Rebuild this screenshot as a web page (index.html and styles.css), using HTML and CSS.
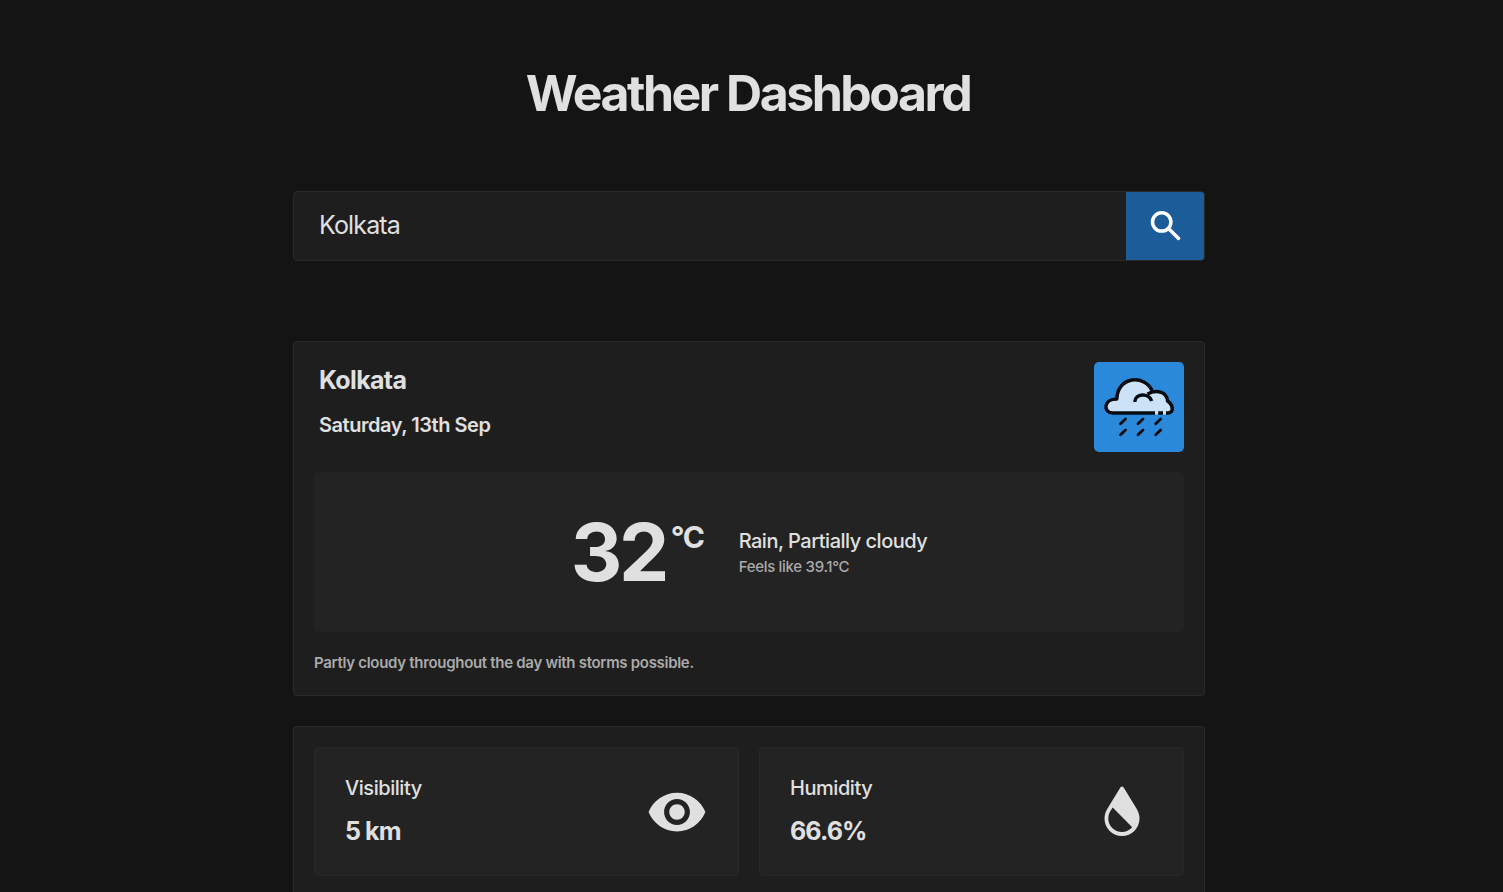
FILE: index.html
```html
<!DOCTYPE html>
<html lang="en">
<head>
<meta charset="utf-8">
<title>Weather Dashboard</title>
<link rel="stylesheet" href="styles.css">
</head>
<body>
<main class="page">
  <h1 class="title">Weather Dashboard</h1>
  <div class="search">
    <span class="query">Kolkata</span>
    <button class="go" aria-label="Search"><svg viewBox="0 0 40 40" width="40" height="40" fill="none" stroke="#fff" stroke-width="3.5" stroke-linecap="round"><circle cx="16.7" cy="15.900" r="9.200"/><path d="M24 23L33.600 32.400"/></svg></button>
  </div>
  <section class="card today">
    <header class="head">
      <div class="place"><h2 class="city">Kolkata</h2><p class="date">Saturday, 13th Sep</p></div>
      <div class="badge"><svg viewBox="0 0 90 90" width="90" height="90" fill="none" stroke="#080b10" stroke-width="3.500" stroke-linejoin="round">
        <path fill="#cce3f7" stroke="none" d="M19 51C9 51 9 37 22.800 37C23.500 14 51 12 58.500 29.500C67 27.500 73 31 73.500 39C80 43 80 51 74 51Z"/>
        <path d="M61 51H19C9 51 9 37 22.800 37C23.500 14 51 12 58.500 29.500"/>
        <path d="M53.500 32C62 27 73 29.500 73.500 39C79.500 43 80 51 74 51H72M64.200 51H69"/>
        <path d="M40.800 40C41 31 55 30.500 57.700 39"/>
        <path stroke="#cce3f7" stroke-width="3" d="M61 51h3M69 51h3"/>
        <path stroke-width="2.800" stroke-linecap="round" d="M26.500 61.700l5-4.700M44 61.700l5-4.700M61.700 61.700l5-4.700M26.500 72.700l5-4.700M44 72.700l5-4.700M61.700 72.700l5-4.700"/>
      </svg></div>
    </header>
    <div class="weather">
      <div class="temp">32<span class="unit">°C</span></div>
      <div class="condition"><p class="state">Rain, Partially cloudy</p><p class="feels">Feels like 39.1°C</p></div>
    </div>
    <p class="summary">Partly cloudy throughout the day with storms possible.</p>
  </section>
  <section class="card stats">
    <div class="stat"><div class="reading"><p class="label">Visibility</p><p class="value">5 km</p></div>
      <svg viewBox="0 0 24 24" width="62" height="62"><path fill="#e0e0e0" d="M12 4.500C7 4.500 2.730 7.610 1 12c1.730 4.390 6 7.500 11 7.500s9.270-3.110 11-7.500c-1.730-4.390-6-7.500-11-7.500zM12 17c-2.760 0-5-2.240-5-5s2.240-5 5-5 5 2.240 5 5-2.240 5-5 5zm0-8c-1.660 0-3 1.340-3 3s1.340 3 3 3 3-1.340 3-3-1.340-3-3-3z"/></svg></div>
    <div class="stat"><div class="reading"><p class="label">Humidity</p><p class="value">66.6%</p></div>
      <svg viewBox="0 0 62 62" width="62" height="62"><path fill="#e0e0e0" fill-rule="evenodd" d="M29.500 6.300Q31 4.500 32.500 6.300L45.500 27.500C47.500 31 48.500 34 48.500 37.700A17.500 17.300 0 0 1 13.500 37.700C13.500 34 14.500 31 16.500 27.500ZM21.700 26.500C19 30 17.300 33.500 17.300 37.500A13.700 13.500 0 0 0 31 51Q37 51 41.200 46.300Z"/></svg></div>
  </section>
</main>
</body>
</html>
```
FILE: styles.css
```css
* { box-sizing: border-box; }
html { height: 100%; overflow: hidden; }
body { height: 100%; overflow: hidden; margin: 0; background: #141414; color: #e0e0e0; font-family: Inter, sans-serif; }
h1, h2, p { margin: 0; }
svg { display: block; }
.page { display: flex; flex-direction: column; width: 912px; height: 100%; margin-left: 293px; padding-top: 63px; }
.page > * { flex-shrink: 0; }
.title { padding-right: 2px; text-align: center; font-size: 50px; line-height: 60px; font-weight: 700; letter-spacing: -2.5px; }
.search { display: flex; align-items: center; justify-content: space-between; height: 70px; margin-top: 68px; padding-left: 25px; border: 1px solid #292929; border-radius: 4px; background: #1e1e1e; overflow: hidden; }
.query { padding-bottom: 2px; font-size: 25px; line-height: 30px; letter-spacing: -.85px; }
.go { display: grid; place-items: center; width: 78px; height: 68px; padding: 0; border: 0; background: #1b5c99; }
.card { padding: 20px; border: 1px solid #292929; border-radius: 4px; background: #1e1e1e; }
.today { height: 355px; margin-top: 80px; }
.head { display: flex; justify-content: space-between; }
.place { padding: 3px 0 0 5px; }
.city { font-size: 25px; line-height: 30px; letter-spacing: -.65px; }
.date { margin-top: 18px; font-size: 20px; line-height: 24px; font-weight: 600; letter-spacing: -.46px; }
.badge { width: 90px; height: 90px; border-radius: 5px; background: #2b89dc; }
.weather { display: flex; justify-content: center; align-items: center; gap: 35px; height: 160px; margin-top: 20px; border-radius: 5px; background: #232323; }
.temp { display: flex; font-size: 80px; line-height: 100px; font-weight: 700; letter-spacing: -3.5px; }
.unit { margin: 17px 0 0 5px; font-size: 30px; line-height: 36px; font-weight: 700; letter-spacing: -1.300px; }
.state { font-size: 20px; line-height: 24px; font-weight: 500; letter-spacing: -.5px; }
.feels { margin-top: 5px; font-size: 15px; line-height: 18px; font-weight: 500; letter-spacing: -.3px; color: #aaa; }
.summary { margin-top: 22px; font-size: 15px; line-height: 18px; font-weight: 600; letter-spacing: -.3px; color: #aaa; }
.stats { display: grid; grid-template-columns: 1fr 1fr; align-items: start; gap: 20px; flex: 1 1 0; min-height: 0; margin-top: 30px; padding-bottom: 0; border-bottom: 0; border-bottom-left-radius: 0; border-bottom-right-radius: 0; }
.stat { display: flex; align-items: center; justify-content: space-between; height: 129px; padding: 0 30px; border: 1px solid #272727; border-radius: 4px; background: #232323; }
.reading { padding-bottom: 1px; }
.label { font-size: 20px; line-height: 24px; font-weight: 500; letter-spacing: -.45px; }
.value { margin-top: 16px; font-size: 25px; line-height: 30px; font-weight: 700; letter-spacing: -.9px; }
```
